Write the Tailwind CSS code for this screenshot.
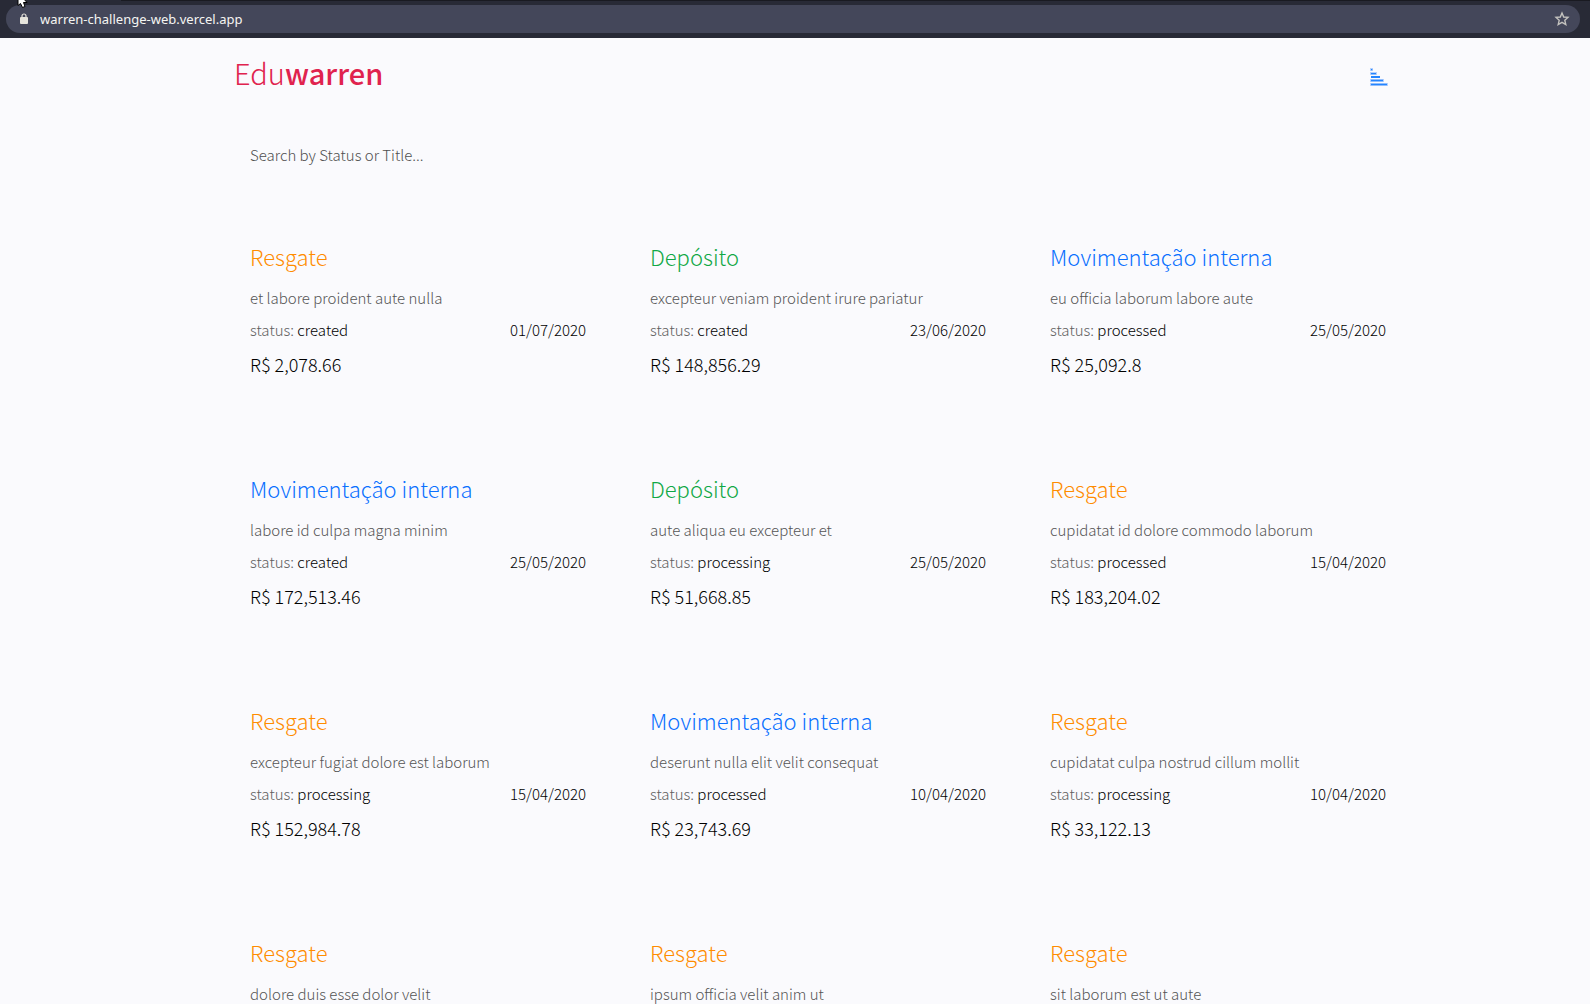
<!DOCTYPE html>
<html lang="pt-BR">
<head>
<meta charset="utf-8">
<title>Eduwarren</title>
<script src="https://cdn.jsdelivr.net/npm/@tailwindcss/browser@4"></script>
</head>
<body class="relative flex h-screen flex-col overflow-hidden bg-[#fafafd] font-['Noto_Sans_CJK_JP',sans-serif]">
<header class="flex h-[38px] shrink-0 items-center bg-[#282a36] pr-2.5 pl-1.5">
  <div class="flex h-7 flex-1 items-center rounded-full bg-[#44475a] pr-2.5 pl-3.5">
    <svg class="h-3 w-2 shrink-0" viewBox="0 0 8 12" aria-hidden="true"><rect y="4" width="8" height="7" rx="1" fill="#e6e4dc"/><path d="M2 4.500V3a2 2 0 0 1 4 0v1.500" fill="none" stroke="#e6e4dc" stroke-width="1.200"/></svg>
    <input aria-label="Address" value="warren-challenge-web.vercel.app" class="ml-3 min-w-0 flex-1 bg-transparent font-['Noto_Sans',sans-serif] text-[13px] leading-5 text-[#f5f5f2] outline-none">
    <button aria-label="Bookmark this page" class="shrink-0"><svg class="size-4" viewBox="0 0 16 16"><path d="M8 2l1.700 4 4.300.4-3.200 2.900 1 4.200L8 11.300l-3.800 2.200 1-4.200L2 6.400 6.300 6z" fill="none" stroke="#c4c3bf" stroke-width="1.400"/></svg></button>
  </div>
</header>
<div class="absolute top-0 right-0 left-[121px] h-px bg-[#191a21]"></div>
<svg class="absolute top-0 left-[17px] h-2 w-3" viewBox="0 0 12 8" aria-hidden="true"><path d="M1 -3V5.500L3.500 3.500L5.500 7.500L8 6.500L6.500 2.500H10L5 -3Z" fill="#fff" stroke="#000"/></svg>

<main class="pl-[46px]">
  <div class="mx-auto max-w-[1168px]">
    <div class="flex items-center justify-between pt-3.5 pr-3.5">
      <h1 class="text-[29px] leading-10 font-light text-[#e0234e]">Edu<b class="font-medium">warren</b></h1>
      <button aria-label="Sort transactions" class="pt-2.5"><svg class="block h-[18px] w-[18px]" viewBox="0 0 18 18"><g fill="#b5d0fc"><path d="M0 0h3v3H0zM0 4h7v3H0zM0 11h14v3H0zM0 15h18v3H0z"/></g><g fill="#2485ff"><path d="M1 1h1.300v1.300H1zM1 4.900h5v1.400H1zM1 8h9v2H1zM1 11.800h12v1.400H1zM1 15.800h16v1.400H1z"/></g></svg></button>
    </div>
    <input type="search" aria-label="Search by Status or Title" placeholder="Search by Status or Title..." class="mt-10 block h-11 w-full bg-transparent px-4 text-[15px] font-light text-[#505050] outline-none placeholder:text-[#505050]">
    <section id="cards" class="mt-[46px] grid grid-cols-3 gap-x-8 gap-y-12"></section>
  </div>
</main>
<script>
const kinds = {
  R: ["Resgate", "text-[#ff8c00]"],
  D: ["Depósito", "text-[#10a845]"],
  M: ["Movimentação interna", "text-[#0a70ff]"]
};
const rows = [
  ["R", "et labore proident aute nulla", "created", "01/07/2020", "2,078.66"],
  ["D", "excepteur veniam proident irure pariatur", "created", "23/06/2020", "148,856.29"],
  ["M", "eu officia laborum labore aute", "processed", "25/05/2020", "25,092.8"],
  ["M", "labore id culpa magna minim", "created", "25/05/2020", "172,513.46"],
  ["D", "aute aliqua eu excepteur et", "processing", "25/05/2020", "51,668.85"],
  ["R", "cupidatat id dolore commodo laborum", "processed", "15/04/2020", "183,204.02"],
  ["R", "excepteur fugiat dolore est laborum", "processing", "15/04/2020", "152,984.78"],
  ["M", "deserunt nulla elit velit consequat", "processed", "10/04/2020", "23,743.69"],
  ["R", "cupidatat culpa nostrud cillum mollit", "processing", "10/04/2020", "33,122.13"],
  ["R", "dolore duis esse dolor velit"],
  ["R", "ipsum officia velit anim ut"],
  ["R", "sit laborum est ut aute"]
];
document.getElementById("cards").innerHTML = rows.map(([k, text, status, date, value]) => `
  <article class="h-[184px] px-4 pt-4 font-light">
    <h2 class="text-[22px] leading-9 ${kinds[k][1]}">${kinds[k][0]}</h2>
    <p class="mt-3 text-[15px] leading-6 text-[#555]">${text}</p>
    ${status ? `<div class="mt-2 flex justify-between text-[15px] leading-6 text-black"><span><span class="text-[#606060]">status:</span> ${status}</span><time>${date}</time></div>
    <p class="mt-2 text-[18px] leading-7 text-black">R$ ${value}</p>` : ""}
  </article>`).join("");
</script>
</body>
</html>
